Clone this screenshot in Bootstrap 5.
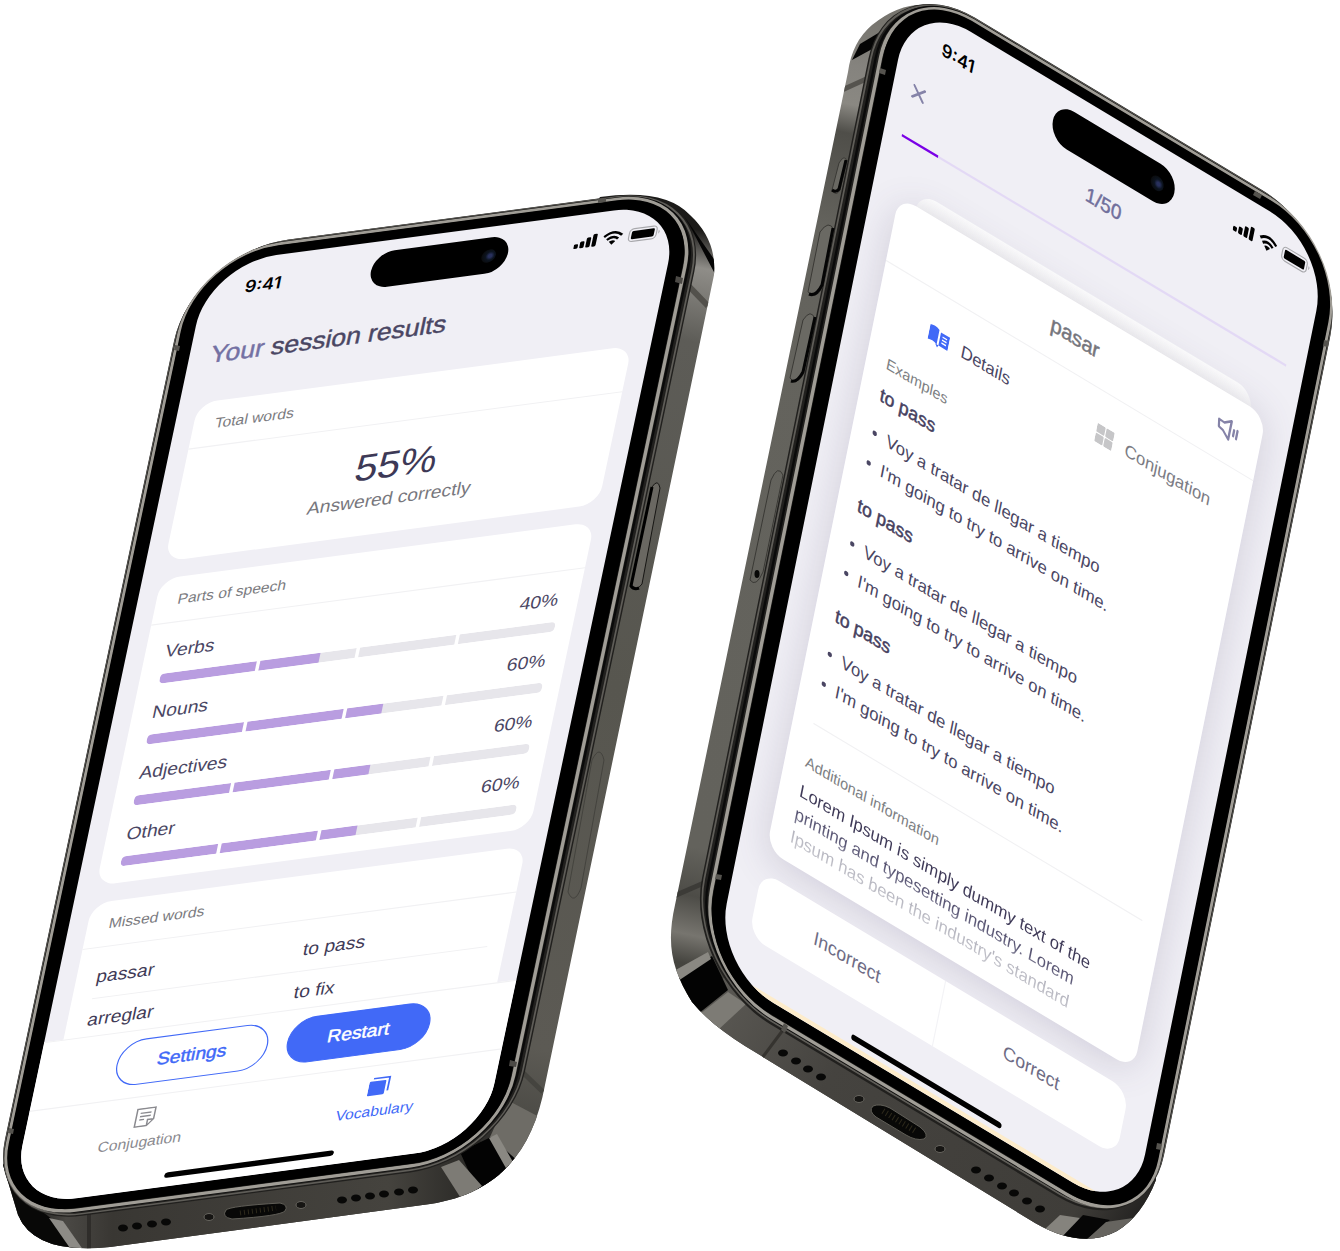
<!DOCTYPE html>
<html lang="en">
<head>
<meta charset="utf-8">
<meta name="viewport" content="width=device-width, initial-scale=1">
<title>Session results</title>
<link href="https://cdn.jsdelivr.net/npm/bootstrap@5.3.0/dist/css/bootstrap.min.css" rel="stylesheet">
<script src="https://cdn.jsdelivr.net/npm/bootstrap@5.3.0/dist/js/bootstrap.bundle.min.js"></script>
<style>
:root{--ink:#4a4663;--muted-ink:#7b7b80;--brand:#4169f7;--ground:#f0eff5;--hair:#f1f1f3}
body{background:#fff;font-family:"Liberation Sans",Arial,sans-serif;overflow-x:hidden}
.stage{position:relative;width:1340px;min-height:1251px}
.hull{position:absolute;inset:0;width:1340px;height:1251px}
/* device screens: 393x852 points, laid flat and tilted as a whole */
.device-screen{position:absolute;top:0;left:0;width:393px;height:852px;border-radius:56px;overflow:hidden;background:var(--ground);color:var(--ink);transform-origin:0 0;font-size:16px;line-height:24px}
.tilt-left{transform:matrix(1.2015,-.159,-.2344,1.107,209,264)}
.tilt-right{transform:matrix(1.0644,.6386,-.2315,1.14,911,-4)}
.statusbar{height:52px;padding:0 12px 0 35px;color:#000}
.tilt-right .statusbar{height:54px}
.clock{font:600 15px/20px Inter,sans-serif}
.island{position:absolute;left:140px;top:10px;width:114px;height:33px;border-radius:17px;background:#000}
.tilt-right .island{top:14px}
.island::after{content:"";position:absolute;right:10px;top:11px;width:12px;height:12px;border-radius:50%;background:radial-gradient(circle at 60% 50%,#28305c 0 15%,#0c1420 40%,#0a0a0a 80%)}
.home-bar{position:absolute;left:127px;bottom:8px;width:141px;height:5px;border-radius:3px;background:#000}
.medium{-webkit-text-stroke:.4px currentColor}
.title{font-size:22px;line-height:28px;font-weight:400;padding:19px 18px 0;margin:0 0 29px}
.title span{color:#7471a3}
.panel{background:#fff;border-radius:16px;margin:0 16px 16px}
.panel-head{font-size:13px;line-height:41px;padding:0 18px;border-bottom:1px solid var(--hair);color:var(--muted-ink);font-weight:400;margin:0}
.score{font-size:34px;line-height:40px;padding-top:18px;color:#3d3956}
.score-note{color:#77777d;padding-bottom:19px}
.meters{display:flex;flex-direction:column;gap:14px;padding:14px 15px 15px 17px}
.meters span+span{padding-right:2px}
.meter{display:flex;gap:3px;height:9px;border-radius:4px;overflow:hidden}
.meter div{flex:1;background:#e7e6eb}
.meter i{display:block;height:9px;background:#b99de0}
.wordlist{width:329px;margin:8px 15px 0 17px;table-layout:fixed}
.wordlist td{padding:7px 0;border-bottom:1px solid var(--hair);color:#3f3b57}
.wordlist td:first-child{width:172px}
.dock{position:absolute;left:0;right:0;bottom:0;height:149px;background:#fff;border-top:1px solid var(--hair)}
.pill{height:42px;border-radius:21px;padding:0 33px;font-size:16px;border:1px solid var(--brand);color:var(--brand);background:#fff}
.pill-solid{background:var(--brand);color:#fff}
.tabs{border-top:1px solid var(--hair);font-size:13px;line-height:18px;height:87px;padding:10px 0 0 2px}
.tabs a{flex:1;text-decoration:none;color:#8a8a8f;display:flex;flex-direction:column;align-items:center;gap:5px}
.tabs a.active{color:var(--brand)}
/* flash card screen */
.bare{border:0;background:none;padding:0;line-height:0}
.quiz-top{height:38px;padding:0 17px;color:#716f9c}
.quiz-count{font-size:17px}
.track{height:2px;margin:20px 16px 0;background:#e3d9f5}
.track div{height:2px;background:#7a00e6}
.back-card{position:absolute;left:40px;right:38px;top:149px;height:50px;border-radius:16px;background:linear-gradient(#fff,#f5f5f6 14px)}
.flash{position:absolute;left:24px;right:24px;top:162px;height:573px;border-radius:16px;background:#fff;box-shadow:0 4px 32px rgba(78,70,110,.2)}
.flash-head{height:57px;border-bottom:1px solid var(--hair);font-size:18px;color:#75757c;padding:0 20px 0 38px}
.modes{height:70px;font-size:15px}
.modes a{color:var(--ink);text-decoration:none;gap:11px}
.modes a+a{color:#7c7c84}
.flash-body{padding:0 18px}
.sub{font-size:13px;line-height:20px;color:#7d8083;margin:0 0 5px}
.sense{margin:0 0 8px;font-size:16px;line-height:24px;font-weight:400;color:#46415f}
.examples{list-style:none;padding:0;margin:0 0 13px;font-size:15px;line-height:26px;white-space:nowrap}
.examples li{display:flex;align-items:center;gap:9px}
.examples li::before{content:"";width:4px;height:4px;border-radius:2px;background:var(--ink)}
.extra{border-top:1px solid #f1f1f3;margin-top:22px;padding-top:23px}
.note{font-size:15px;line-height:20px;white-space:nowrap;margin:0;background:linear-gradient(#3e3957 16px,#5f5c7a 32px,#b4b4be 46px,#cbcbd1);-webkit-background-clip:text;background-clip:text;color:transparent}
.answers{position:absolute;left:24px;right:24px;top:754px;height:57px;border-radius:16px;background:#fff}
.answers button{flex:1;border:0;background:none;color:#6e6c85;font-size:16px;padding:0 0 2px}
.answers button+button{border-left:1px solid #f3f3f6}
.sand{position:absolute;left:0;right:0;bottom:0;height:4px;background:#fdeccb}
</style>
</head>
<body>
<svg width="0" height="0" class="d-block position-absolute" aria-hidden="true">
<symbol id="status" viewBox="0 0 72 16">
<rect x="0" y="9" width="3.600" height="4" rx="1"/><rect x="5" y="7" width="3.600" height="6" rx="1"/><rect x="10" y="4" width="3.600" height="9" rx="1"/><rect x="15" y="1.500" width="3.600" height="11.500" rx="1"/>
<path fill="none" stroke="#000" stroke-width="2.200" d="M24.500 5.600Q32-1 39.500 5.600M27.300 8.600Q32 4.600 36.700 8.600"/><path d="M32 13.500l-2.700-3q2.700-2 5.400 0z"/>
<rect x="45.500" y="1.500" width="23" height="11.500" rx="3.500" fill="none" stroke="#a8a8ac"/><rect x="47.500" y="3.500" width="19" height="7.500" rx="1.200"/><path d="M70 5.500q2 1.500 0 3.500z" fill="#a8a8ac"/>
</symbol>
</svg>
<main class="stage mx-auto">

<section aria-label="Results phone">
<svg class="hull" viewBox="0 0 1340 1251" aria-hidden="true">
<defs>
<linearGradient id="sideA" gradientUnits="userSpaceOnUse" x1="700" y1="230" x2="520" y2="1140"><stop offset="0" stop-color="#1c1b19"/><stop offset=".04" stop-color="#8f8d88"/><stop offset=".12" stop-color="#5d5c57"/><stop offset=".5" stop-color="#57564f"/><stop offset=".9" stop-color="#5c5a54"/><stop offset=".98" stop-color="#4b4a45"/><stop offset="1" stop-color="#302f2c"/></linearGradient>
<linearGradient id="baseA" gradientUnits="userSpaceOnUse" x1="20" y1="0" x2="480" y2="0"><stop offset="0" stop-color="#0c0c0b"/><stop offset=".1" stop-color="#4a4844"/><stop offset=".2" stop-color="#393733"/><stop offset=".8" stop-color="#45433e"/><stop offset="1" stop-color="#282724"/></linearGradient>
<clipPath id="bodyA"><path d="M600 197Q665 188 690 215Q717 240 714 275L545 1085C533 1150 500 1193 430 1204L110 1247Q35 1255 18 1215L3 1165Z"/></clipPath>
</defs>
<g clip-path="url(#bodyA)">
<rect width="740" height="1251" fill="url(#sideA)"/>
<path d="M0 1130L480 1140L510 1190L440 1251H0Z" fill="url(#baseA)"/>
<path d="M684 216L716 262V276L690 226Z" fill="#050505"/><path d="M678 275L708 306" stroke="#53514c" stroke-width="6"/>
<path d="M512 1062L543 1092" stroke="#45443f" stroke-width="5"/>
<path d="M507 1100L545 1120L514 1168L490 1137Z" fill="#6e6c66"/><path d="M491 1137L520 1163L480 1196L460 1152Z" fill="#030303"/>
<path d="M489 1138L497 1134L513 1162L507 1170Z" fill="#8a8882"/><path d="M441 1167L459 1160L482 1186L462 1200Z" fill="#7d7b75"/>
<path d="M20 1195L52 1219L82 1251H20Z" fill="#080807"/><path d="M49 1218L63 1221L84 1251H72Z" fill="#8d8b86"/>
<path d="M89 1208V1250" stroke="#2f2d2a" stroke-width="4"/>
</g>
<g transform="matrix(1.2015 -.159 -.2344 1.107 209 264)" fill="none">
<rect x="-16" y="-13" width="433" height="882" rx="80" fill="#21201e"/>
<rect x="-15" y="-12" width="430" height="879" rx="78" stroke="#5f5d58" stroke-width="1.500"/>
<rect x="-14" y="-11" width="425" height="875" rx="74" stroke="#0a0a0a" stroke-width="2"/>
<rect x="-13" y="-10" width="421" height="873" rx="71" stroke="#a09d96" stroke-width="3"/>
<rect x="-12" y="-9" width="418" height="870" rx="68" fill="#000"/>
</g>
<path d="M598 199l8-1v4l-8 1zM175 345l5 1-1 5-5-1zM9 1128l5 1-1 5-5-1z" fill="#55534e"/>
<path d="M676 276l7 2-1 6-7-2zM510 1060l7 2-1 5-7-1z" fill="#4c4a46"/>
<g fill="#6a6862" stroke="#171614"><path d="M652 487Q658 478 660 488L642 584Q636 592 631 586Z"/><path d="M652 487L631 586Q634 590 639 588" fill="none" stroke="#000" stroke-width="3"/></g>
<path d="M592 760Q600 744 604 760L581 888Q574 906 568 892Z" fill="none" stroke="#44433e"/>
<g fill="#080807"><ellipse cx="123" cy="1228" rx="5" ry="3.500"/><ellipse cx="137" cy="1226" rx="5" ry="3.500"/><ellipse cx="152" cy="1224" rx="5" ry="3.500"/><ellipse cx="166" cy="1222" rx="5" ry="3.500"/>
<ellipse cx="342" cy="1200" rx="5" ry="3.500"/><ellipse cx="356" cy="1198" rx="5" ry="3.500"/><ellipse cx="370" cy="1196" rx="5" ry="3.500"/><ellipse cx="384" cy="1194" rx="5" ry="3.500"/><ellipse cx="399" cy="1192" rx="5" ry="3.500"/><ellipse cx="413" cy="1190" rx="5" ry="3.500"/>
<path d="M226 1210Q230 1206 280 1203Q289 1205 285 1211Q280 1216 232 1219Q221 1217 226 1210Z" stroke="#605e57"/></g>
<path d="M240 1213l36-5" stroke="#2e2a1c" stroke-width="5" stroke-dasharray="1 3"/>
<g fill="#161513" stroke="#66645e"><ellipse cx="209" cy="1217" rx="5" ry="3.500"/><ellipse cx="301" cy="1205" rx="5" ry="3.500"/></g>
</svg>

<div class="device-screen tilt-left">
<div class="statusbar d-flex align-items-center justify-content-between"><span class="clock">9:41</span><svg width="72" height="16"><use href="#status"/></svg></div>
<div class="island"></div>
<h1 class="title medium"><span>Your</span> session results</h1>
<section class="panel text-center">
<h2 class="panel-head text-start">Total words</h2>
<div class="score">55%</div>
<div class="score-note">Answered correctly</div>
</section>
<section class="panel">
<h2 class="panel-head">Parts of speech</h2>
<div class="meters">
<div class="d-flex flex-column gap-2"><div class="d-flex justify-content-between"><span>Verbs</span><span>40%</span></div><div class="meter"><div><i style="width:100%"></i></div><div><i style="width:62%"></i></div><div></div><div></div></div></div>
<div class="d-flex flex-column gap-2"><div class="d-flex justify-content-between"><span>Nouns</span><span>60%</span></div><div class="meter"><div><i style="width:100%"></i></div><div><i style="width:100%"></i></div><div><i style="width:38%"></i></div><div></div></div></div>
<div class="d-flex flex-column gap-2"><div class="d-flex justify-content-between"><span>Adjectives</span><span>60%</span></div><div class="meter"><div><i style="width:100%"></i></div><div><i style="width:100%"></i></div><div><i style="width:38%"></i></div><div></div></div></div>
<div class="d-flex flex-column gap-2"><div class="d-flex justify-content-between"><span>Other</span><span>60%</span></div><div class="meter"><div><i style="width:100%"></i></div><div><i style="width:100%"></i></div><div><i style="width:38%"></i></div><div></div></div></div>
</div>
</section>
<section class="panel pb-5">
<h2 class="panel-head">Missed words</h2>
<table class="wordlist"><tbody><tr><td>passar</td><td>to pass</td></tr><tr><td>arreglar</td><td>to fix</td></tr></tbody></table>
</section>
<div class="dock d-flex flex-column justify-content-between">
<div class="d-flex justify-content-center gap-3 pt-2"><button class="pill medium" type="button">Settings</button><button class="pill pill-solid medium" type="button">Restart</button></div>
<nav class="tabs d-flex">
<a href="#conjugation"><svg width="18" height="18" viewBox="0 0 18 18" fill="none" stroke="currentColor" stroke-width="1.300"><path d="M1.500 1h15v10.500L11.500 17h-10zM11.500 17v-5.500h5M4.500 5h9M4.500 8h9M4.500 11h4"/></svg>Conjugation</a>
<a href="#vocabulary" class="active"><svg width="18" height="18" viewBox="0 0 18 18" fill="none" stroke="currentColor" stroke-width="1.500"><rect x="0" y="4" width="14" height="13" rx="1" fill="currentColor" stroke="none"/><path d="M3 1.500h13.500V14"/></svg>Vocabulary</a>
</nav>
</div>
<div class="home-bar"></div>
</div>
</section>

<section aria-label="Flash card phone">
<svg class="hull" viewBox="0 0 1340 1251" aria-hidden="true">
<defs>
<linearGradient id="sideB" gradientUnits="userSpaceOnUse" x1="870" y1="20" x2="670" y2="960"><stop offset="0" stop-color="#77756f"/><stop offset=".05" stop-color="#85837e"/><stop offset=".09" stop-color="#8a8882"/><stop offset=".12" stop-color="#4f4e49"/><stop offset=".22" stop-color="#64635d"/><stop offset=".88" stop-color="#63625c"/><stop offset=".93" stop-color="#4d4c47"/><stop offset=".97" stop-color="#77756f"/><stop offset="1" stop-color="#45443f"/></linearGradient>
<linearGradient id="baseB" gradientUnits="userSpaceOnUse" x1="700" y1="1000" x2="1140" y2="1250"><stop offset="0" stop-color="#5c5a55"/><stop offset=".3" stop-color="#45433f"/><stop offset=".85" stop-color="#3f3d39"/><stop offset="1" stop-color="#1c1b1a"/></linearGradient>
<clipPath id="bodyB"><path d="M930 5Q900 2 872 25Q852 42 848 72L675 905C666 945 672 970 692 1002Q710 1024 745 1046L1035 1223Q1082 1250 1117 1231Q1142 1216 1156 1180L1100 400Z"/></clipPath>
</defs>
<g clip-path="url(#bodyB)">
<rect x="660" width="520" height="1251" fill="url(#sideB)"/>
<path d="M660 1010L740 970L1180 1180V1251H660Z" fill="url(#baseB)"/>
<path d="M860 44L900 20L885 42L852 60Z" fill="#050505"/><path d="M842 90L886 70" stroke="#55534e" stroke-width="5"/>
<path d="M674 896L720 876" stroke="#3c3b37" stroke-width="5"/>
<path d="M672 982L712 956L728 990L698 1014Z" fill="#030303"/><path d="M672 972L708 952L711 959L675 983Z" fill="#8a8882"/>
<path d="M700 1014L728 992L746 1004L718 1030Z" fill="#7d7b75"/>
<path d="M783 1030L762 1058" stroke="#35332f" stroke-width="3"/>
<path d="M1060 1215L1080 1218L1060 1245L1044 1230Z" fill="#85837d"/><path d="M1083 1215L1110 1220L1080 1245L1058 1241Z" fill="#060606"/><path d="M1106 1222L1140 1217L1120 1240L1084 1242Z" fill="#66645f"/>
</g>
<g transform="matrix(1.0644 .6386 -.2315 1.14 911 -4)" fill="none">
<rect x="-25" y="-13" width="434" height="883" rx="82" fill="#21201e"/>
<rect x="-23" y="-12" width="431" height="879" rx="80" stroke="#5f5d58" stroke-width="1.500"/>
<rect x="-19" y="-11" width="426" height="876" rx="76" stroke="#0a0a0a" stroke-width="2"/>
<rect x="-15" y="-10" width="421" height="874" rx="72" stroke="#a09d96" stroke-width="3"/>
<rect x="-13" y="-9" width="418" height="871" rx="68" fill="#000"/>
</g>
<path d="M1255 191l7 4-2 4-7-4zM1324 340l5 1-1 6-5-1zM1157 1143l5 1-1 6-5-1zM784 1023l4 3-3 7-4-3zM880 68l6 2-1 5-6-2zM716 874l6 1-1 5-6-1z" fill="#55534e"/>
<g fill="#6a6963" stroke="#3a3935">
<path d="M839 163Q845 153 847 162L840 190Q836 197 832 190Z"/><path d="M820 232Q829 219 834 230L822 288Q816 300 808 292Z"/><path d="M803 320Q811 308 815 319L803 375Q796 386 790 378Z"/>
<path d="M771 480Q778 464 783 475L763 572Q756 588 750 580Z" fill="none"/></g>
<g fill="none" stroke="#050505" stroke-width="3"><path d="M846 160L839 189Q836 193 832 190"/><path d="M833 228L822 285Q816 297 809 294"/><path d="M815 317L803 372Q797 383 791 381"/></g>
<ellipse cx="757" cy="574" rx="2.500" ry="4" fill="#080807"/>
<g fill="#080807"><ellipse cx="783" cy="1053" rx="5" ry="3.500"/><ellipse cx="796" cy="1061" rx="5" ry="3.500"/><ellipse cx="808" cy="1069" rx="5" ry="3.500"/><ellipse cx="821" cy="1077" rx="5" ry="3.500"/>
<ellipse cx="976" cy="1170" rx="5" ry="3.500"/><ellipse cx="989" cy="1178" rx="5" ry="3.500"/><ellipse cx="1002" cy="1186" rx="5" ry="3.500"/><ellipse cx="1014" cy="1193" rx="5" ry="3.500"/><ellipse cx="1027" cy="1201" rx="5" ry="3.500"/><ellipse cx="1040" cy="1209" rx="5" ry="3.500"/>
<path d="M873 1106Q880 1103 890 1108L920 1127Q930 1135 924 1139Q916 1141 906 1135L876 1117Q868 1111 873 1106Z" stroke="#605e57"/></g>
<path d="M883 1111l34 21" stroke="#2e2a1c" stroke-width="6" stroke-dasharray="1 3"/>
<g fill="#161513" stroke="#66645e"><ellipse cx="859" cy="1099" rx="5" ry="3.500"/><ellipse cx="940" cy="1149" rx="5" ry="3.500"/></g>
</svg>

<div class="device-screen tilt-right">
<div class="statusbar d-flex align-items-center justify-content-between"><span class="clock">9:41</span><svg width="72" height="16"><use href="#status"/></svg></div>
<div class="island"></div>
<div class="quiz-top d-flex align-items-center justify-content-between">
<button class="bare" type="button" aria-label="Close"><svg width="12" height="12" viewBox="0 0 12 12" stroke="#8583a8" stroke-width="2" stroke-linecap="round"><path d="M1 1l10 10M11 1L1 11"/></svg></button>
<span class="quiz-count medium">1/50</span><span class="ps-2 pe-1"></span>
</div>
<div class="track"><div style="width:9.500%"></div></div>
<div class="back-card"></div>
<article class="flash">
<div class="flash-head d-flex align-items-center justify-content-between"><span></span><span class="medium">pasar</span>
<button class="bare" type="button" aria-label="Listen"><svg width="20" height="20" viewBox="0 0 20 20" fill="none" stroke="#8583a8" stroke-width="2" stroke-linejoin="round" stroke-linecap="round"><path d="M1 6l5 .5L12 2v16L6 13l-4-1zM15.500 8v5M18.500 7v7"/></svg></button></div>
<nav class="modes d-flex align-items-center">
<a href="#details" class="d-flex align-items-center justify-content-center w-50"><svg width="19" height="17" viewBox="0 0 22 20" fill="#4169f7"><path d="M0 1.500Q5-.500 10 2v15Q5 14.500 0 16.500zM12 3.500V17l-1 2.500L8.500 17H22V3.500z"/><path d="M14.500 7h5M14.500 10h5M14.500 13h5" stroke="#fff" stroke-width="1.400"/></svg>Details</a>
<a href="#conjugation" class="d-flex align-items-center justify-content-center w-50"><svg width="16" height="16" viewBox="0 0 17 17" fill="#c6c6c8"><rect width="8" height="8" rx="1"/><rect x="9" width="8" height="8" rx="1"/><rect y="9" width="8" height="8" rx="1"/><rect x="9" y="9" width="8" height="8" rx="1"/></svg>Conjugation</a>
</nav>
<div class="flash-body">
<h2 class="sub">Examples</h2>
<h3 class="sense medium">to pass</h3><ul class="examples"><li>Voy a tratar de llegar a tiempo</li><li>I'm going to try to arrive on time.</li></ul>
<h3 class="sense medium">to pass</h3><ul class="examples"><li>Voy a tratar de llegar a tiempo</li><li>I'm going to try to arrive on time.</li></ul>
<h3 class="sense medium">to pass</h3><ul class="examples"><li>Voy a tratar de llegar a tiempo</li><li>I'm going to try to arrive on time.</li></ul>
<div class="extra"><h2 class="sub">Additional information</h2>
<p class="note">Lorem Ipsum is simply dummy text of the<br>printing and typesetting industry. Lorem<br>Ipsum has been the industry's standard</p></div>
</div>
</article>
<div class="answers d-flex"><button type="button">Incorrect</button><button type="button">Correct</button></div>
<div class="sand"></div>
<div class="home-bar"></div>
</div>
</section>
</main>
</body>
</html>
